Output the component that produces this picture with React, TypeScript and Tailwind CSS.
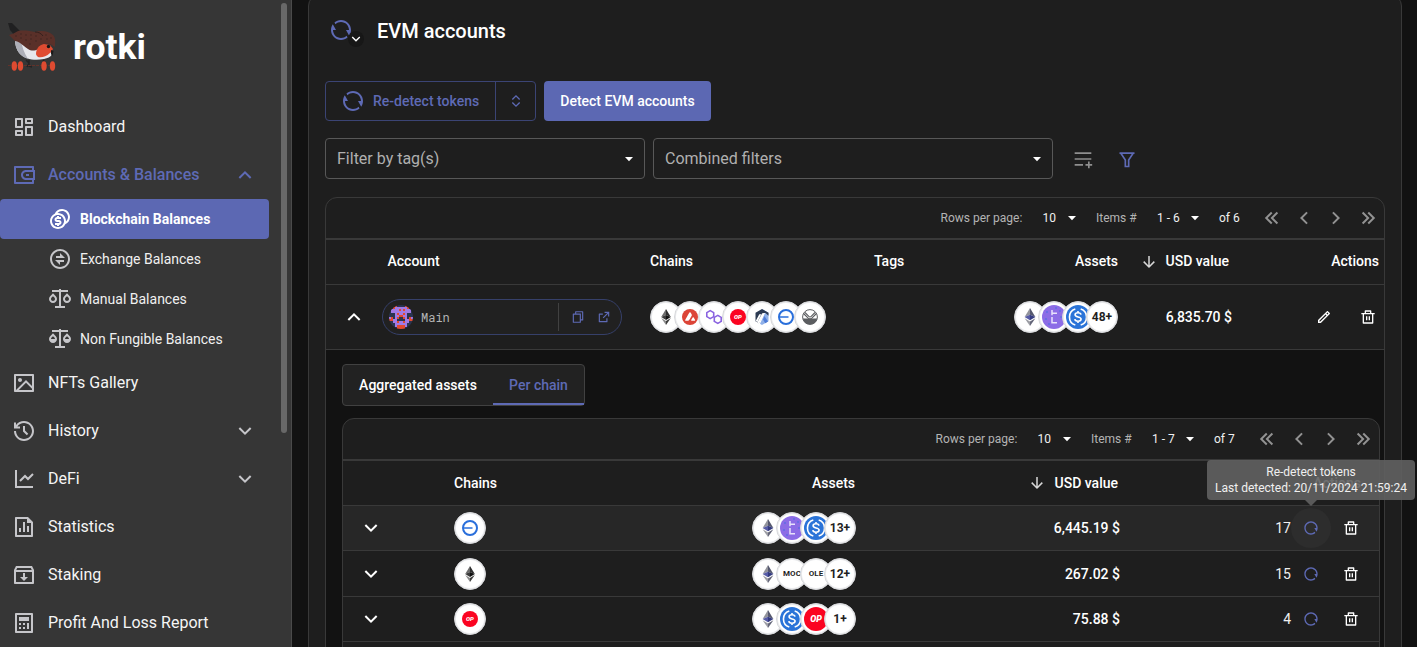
import type { ReactNode } from 'react';
import {
  RiArrowDownLine,
  RiArrowDownSLine,
  RiArrowLeftDoubleLine,
  RiArrowLeftSLine,
  RiArrowRightDoubleLine,
  RiArrowRightSLine,
  RiArrowUpSLine,
  RiCalculatorLine,
  RiCoinsLine,
  RiDashboardLine,
  RiDeleteBinLine,
  RiExchangeLine,
  RiExpandUpDownLine,
  RiExternalLinkLine,
  RiFileChartLine,
  RiFileCopyLine,
  RiFilterLine,
  RiHistoryLine,
  RiImageLine,
  RiInboxArchiveLine,
  RiLineChartLine,
  RiPencilLine,
  RiPlayListAddLine,
  RiRefreshLine,
  RiRestartLine,
  RiScalesFill,
  RiScalesLine,
  RiWallet3Line,
} from 'react-icons/ri';

function BirdLogo() {
  return (
    <svg viewBox="0 0 48 50" className="h-[50px] w-12 shrink-0">
      <path d="M0 1h4l9 9-6 4-5-6z" fill="#202021" />
      <path d="M7 16c0 7 1 11 5 16 5 5 14 7 24 5 5-1 8-3 8-6L30 24 16 18z" fill="#e6e7ec" />
      <path d="M7 16c0 7 1 11 5 16 2 2 5 4 8 5-4-6-6-13-7-18z" fill="#adafb8" />
      <path d="M1 13c3-1 6-2 9-4 6-1 12 0 17 1 6-2 14-1 18 3 3 3 2 8 2 12l-5-3c-5-1-9 0-12 5-3 2-7 2-10 0-6-4-9-8-13-8z" fill="#5a3029" />
      <path d="M27 10c3 0 6 1 8 4" stroke="#33201d" strokeWidth="1" fill="none" />
      <g fill="#3a2420">
        {[[8, 14], [13, 12], [13, 16], [18, 13], [18, 18], [23, 13], [23, 17], [22, 22], [28, 14], [28, 19], [33, 17], [38, 13], [39, 17], [43, 16]].map(([x, y]) => (
          <circle key={`${x}-${y}`} cx={x} cy={y} r="0.7" />
        ))}
      </g>
      <path d="M28 32c0-5 3-9 8-10l6 1 3 4c-1 2-2 3-3 4-4 4-9 5-12 4-1-1-2-2-2-3z" fill="#df4b31" />
      <circle cx="40.5" cy="24.5" r="1.7" fill="#161616" />
      <path d="M43 28l2.5 1-1 5-1.500-2z" fill="#1a1a1a" />
      <path d="M18 38l3 3-2 4M21 38v6l3 1M35 38l3 4" stroke="#232324" strokeWidth="1.5" fill="none" />
      <path d="M0 43.500h47" stroke="#63322a" strokeWidth="1" strokeDasharray="3 1" />
      <ellipse cx="6.300" cy="44" rx="2.700" ry="4.800" fill="#df4b31" />
      <ellipse cx="12.500" cy="44" rx="2.700" ry="4.800" fill="#df4b31" />
      <ellipse cx="36" cy="44" rx="2.700" ry="4.800" fill="#df4b31" />
      <ellipse cx="44.500" cy="44" rx="2.700" ry="4.800" fill="#df4b31" />
    </svg>
  );
}

function Caret() {
  return (
    <svg viewBox="0 0 24 24" className="size-6 shrink-0" fill="#fff">
      <path d="M8 10h8l-4 4.300z" />
    </svg>
  );
}

function Ethereum({ tint = false, className = 'h-4 w-4' }: { tint?: boolean; className?: string }) {
  const c = tint
    ? ['#93949c', '#55586f', '#565ba6', '#343b80', '#9c9da4', '#65677a']
    : ['#6b6b6b', '#2f2f2f', '#3a3a3a', '#111', '#8a8a8a', '#3c3c3b'];
  return (
    <svg viewBox="0 0 16 16" className={className}>
      <path d="M8 0L3.2 8.1 8 5.9z" fill={c[0]} />
      <path d="M8 0v5.9l4.8 2.2z" fill={c[1]} />
      <path d="M3.2 8.1L8 10.9v-5z" fill={c[2]} />
      <path d="M8 10.9l4.8-2.8L8 5.9z" fill={c[3]} />
      <path d="M3.2 9.1L8 16v-4.1z" fill={c[4]} />
      <path d="M8 16l4.8-6.9L8 11.9z" fill={c[5]} />
    </svg>
  );
}

function Avalanche() {
  return (
    <svg viewBox="0 0 16 16" className="h-4 w-4">
      <circle cx="8" cy="8" r="8" fill="#dc4437" />
      <path d="M8 3.2c.4 0 .6.2.8.6l.9 1.7c.2.5.2.8 0 1.3L7.200 11c-.3.5-.6.7-1.200.7H3.900c-.7 0-.9-.4-.6-1l3.900-6.900c.2-.4.4-.6.8-.6zM10.700 8.600c.3-.4.7-.4 1 0l1.300 2.100c.3.6.1 1-.6 1H9.900c-.7 0-.9-.4-.6-1z" fill="#fff" />
    </svg>
  );
}

function Polygon() {
  return (
    <svg viewBox="0 0 16 16" className="h-4 w-4" fill="none" stroke="#8a63e0" strokeWidth="1.6" strokeLinejoin="round">
      <path d="M4.200 1.600l3.500 2v4L4.200 9.600.8 7.600v-4z" />
      <path d="M11.800 6.400l3.400 2v4l-3.400 2-3.500-2v-4z" />
    </svg>
  );
}

function Optimism({ className = 'size-4 text-[6px]' }: { className?: string }) {
  return (
    <span className={`flex shrink-0 items-center justify-center rounded-full bg-[#fb0421] font-black italic leading-none text-white ${className}`}>
      OP
    </span>
  );
}

function Arbitrum() {
  return (
    <svg viewBox="0 0 16 16" className="h-4 w-4">
      <path d="M8 0l6.500 3.800v8.400L8 16l-2-1.200L11 4 8 1z" fill="#8fb0e8" />
      <path d="M8 0l6.500 3.800v3L11.500 4h-2L5 14.200 1.500 12.200V3.800z" fill="#2c3a52" />
      <path d="M8.200 4.200h2.200L5.200 14.500l-1.900-1.100zM5.300 5.200h2L3.400 13l-1.700-1z" fill="#fff" />
      <path d="M10.500 7l3.500 5.500-2.700 1.700-2.300-3.800z" fill="#4d7bd6" />
    </svg>
  );
}

function Base() {
  return (
    <svg viewBox="0 0 16 16" className="h-4 w-4">
      <circle cx="8" cy="8" r="7" fill="none" stroke="#2a6fdb" strokeWidth="2" />
      <path d="M1 8h9.500" stroke="#2a6fdb" strokeWidth="1.4" />
    </svg>
  );
}

function Scroll() {
  return (
    <svg viewBox="0 0 16 16" className="h-4 w-4">
      <circle cx="8" cy="8" r="7.400" fill="#fff" stroke="#5b5d60" strokeWidth="1" />
      <path d="M.8 9.500h14.400A7.400 7.400 0 018 15.500 7.400 7.400 0 01.8 9.500z" fill="#5b5d60" />
      <path d="M1.500 4.500l4.700 4.700c1 .9 2.600.9 3.600 0l4.700-4.700M3 3.500l3.800 3.800c.7.6 1.700.6 2.400 0L13 3.500" fill="none" stroke="#5b5d60" strokeWidth="1.100" />
    </svg>
  );
}

function Tether() {
  return (
    <svg viewBox="0 0 24 24" className="h-6 w-6">
      <circle cx="12" cy="12" r="12" fill="#8c6ce6" />
      <path d="M10 5v5.200M10 8.300h5M10 12v5.700h5" fill="none" stroke="#e8e2fb" strokeWidth="1.500" />
      <g fill="#2f6fe0">
        <circle cx="5" cy="7" r=".7" />
        <circle cx="18" cy="6" r=".7" />
        <circle cx="4" cy="14" r=".7" />
        <circle cx="7" cy="19" r=".7" />
        <circle cx="19" cy="12" r=".7" />
        <circle cx="14" cy="3" r=".7" />
      </g>
    </svg>
  );
}

function UsdCoin() {
  return (
    <svg viewBox="0 0 24 24" className="h-6 w-6" fill="none" stroke="#fff">
      <circle cx="12" cy="12" r="12" fill="#2b74d8" stroke="none" />
      <path d="M9.300 4a8.400 8.400 0 000 16M14.700 4a8.400 8.400 0 010 16" strokeWidth="1.600" />
      <path d="M15 9.700c-.2-1.200-1.300-1.900-3-1.900-1.800 0-2.900.8-2.900 2 0 2.900 6 1.400 6 4.300 0 1.300-1.200 2.100-3.100 2.100s-3-.8-3.200-2.100M12 6v1.800M12 16.200V18" strokeWidth="1.600" />
    </svg>
  );
}

const avatarRows = [
  '...r....r...',
  '..rppppppr..',
  '.pppprprppp.',
  '.pppppppppp.',
  '...prpprp...',
  '...pprrpp...',
  'pr.prnnrp.rp',
  'rrppnnnnpprr',
  '..pprpprpp..',
  '...pppppp...',
  '...prrrrp...',
  '....rrrr....',
];

function Avatar() {
  return (
    <svg viewBox="0 0 12 12" className="size-6 rounded-full bg-[#2a3450]" shapeRendering="crispEdges">
      {avatarRows.flatMap((row, y) =>
        row.split('').map((c, x) =>
          c === 'p' || c === 'r' ? (
            <rect key={`${x}-${y}`} x={x} y={y} width="1" height="1" fill={c === 'p' ? '#a07ae6' : '#e2492f'} />
          ) : null,
        ),
      )}
    </svg>
  );
}

function Disc({ children }: { children: ReactNode }) {
  return (
    <span className="flex size-8 shrink-0 items-center justify-center overflow-hidden rounded-full border border-[#d6d7da] bg-white text-[12px] font-bold text-[#1f1f1f] shadow-[inset_0_0_0_1px_#e9eaec]">
      {children}
    </span>
  );
}

function Ticker({ children }: { children: string }) {
  return <span className="text-[8px] font-bold">{children}</span>;
}

const items = [
  { icon: RiImageLine, label: 'NFTs Gallery' },
  { icon: RiHistoryLine, label: 'History', more: true },
  { icon: RiLineChartLine, label: 'DeFi', more: true },
  { icon: RiFileChartLine, label: 'Statistics' },
  { icon: RiInboxArchiveLine, label: 'Staking' },
  { icon: RiCalculatorLine, label: 'Profit And Loss Report' },
];

const balances = [
  { icon: RiCoinsLine, label: 'Blockchain Balances', active: true },
  { icon: RiExchangeLine, label: 'Exchange Balances' },
  { icon: RiScalesLine, label: 'Manual Balances' },
  { icon: RiScalesFill, label: 'Non Fungible Balances' },
];

function Sidebar() {
  return (
    <aside className="flex h-full w-[292px] shrink-0 border-r border-[#4a4a4a] bg-[#363636]">
      <nav className="w-[281px] shrink-0">
        <div className="flex h-[103px] items-start pl-2 pt-[22px]">
          <BirdLogo />
          <span className="ml-[17px] mt-[3px] text-[35.5px] font-bold leading-[44px] text-white">rotki</span>
        </div>
        <div className="flex h-12 items-center pl-3 text-[16px] text-[#f5f5f5]">
          <RiDashboardLine className="mr-3 size-6 text-[#c6c6ca]" />
          Dashboard
        </div>
        <div className="flex h-12 items-center pl-3 pr-6 text-[16px] font-medium text-[#5e6ab5]">
          <RiWallet3Line className="mr-3 size-6" />
          <span className="flex-1">Accounts &amp; Balances</span>
          <RiArrowUpSLine className="size-6" />
        </div>
        {balances.map(({ icon: Icon, label, active }) => (
          <div
            key={label}
            className={`flex h-10 w-[269px] items-center rounded pl-12 text-[14px] ${active ? 'bg-[#5c68b3] font-bold text-white' : 'text-[#f0f0f0]'}`}
          >
            <Icon className={`mr-2 size-6 ${active ? 'text-white' : 'text-[#c6c6ca]'}`} />
            {label}
          </div>
        ))}
        {items.map(({ icon: Icon, label, more }) => (
          <div key={label} className="flex h-12 items-center pl-3 pr-6 text-[16px] text-[#f5f5f5]">
            <Icon className="mr-3 size-6 text-[#c6c6ca]" />
            <span className="flex-1">{label}</span>
            {more && <RiArrowDownSLine className="size-6 text-[#c6c6ca]" />}
          </div>
        ))}
      </nav>
      <div className="mt-[3px] h-[430px] w-1.5 shrink-0 rounded-full bg-[#686868]" />
    </aside>
  );
}

function Pagination({ range, total }: { range: string; total: string }) {
  return (
    <div className="flex h-10 items-center justify-end pr-1 text-[12px] text-[#f0f0f0]">
      <span className="w-[102px] text-[#b4b4b4]">Rows per page:</span>
      <span className="w-[17.5px]">10</span>
      <Caret />
      <span className="ml-3 w-[61px] text-[#b4b4b4]">Items #</span>
      <span className="w-[26px] whitespace-nowrap">{range}</span>
      <Caret />
      <span className="ml-3 w-[41px]">{total}</span>
      <span className="flex gap-2 text-[#929292]">
        <RiArrowLeftDoubleLine className="size-6" />
        <RiArrowLeftSLine className="size-6" />
        <RiArrowRightSLine className="size-6" />
        <RiArrowRightDoubleLine className="size-6" />
      </span>
    </div>
  );
}

const chainRows = [
  {
    chain: <Base />,
    assets: [<Ethereum tint className="size-[18px]" />, <Tether />, <UsdCoin />, '13+'],
    value: '6,445.19 $',
    tokens: 17,
    height: 'h-[45px] bg-[#272727]',
    tip: true,
  },
  {
    chain: <Ethereum />,
    assets: [<Ethereum tint className="size-[18px]" />, <Ticker>MOC</Ticker>, <Ticker>OLE</Ticker>, '12+'],
    value: '267.02 $',
    tokens: 15,
    height: 'h-[46px]',
  },
  {
    chain: <Optimism />,
    assets: [<Ethereum tint className="size-[18px]" />, <UsdCoin />, <Optimism className="size-6 text-[9px]" />, '1+'],
    value: '75.88 $',
    tokens: 4,
    height: 'h-[45px]',
  },
];

function Tooltip() {
  return (
    <div className="absolute bottom-[48px] left-1/2 z-10 w-[208px] -translate-x-1/2 rounded bg-[#616161]/90 py-1 text-center text-[12px] leading-4 text-[#f0f0f0]">
      <div>Re-detect tokens</div>
      <div className="whitespace-nowrap">Last detected: 20/11/2024 21:59:24</div>
      <div className="absolute left-1/2 top-full -translate-x-1/2 border-x-[6px] border-t-[6px] border-x-transparent border-t-[#616161]/90" />
    </div>
  );
}

function ChainTable() {
  return (
    <div className="ml-4 mr-1 mt-3 h-[300px] rounded-t-xl border border-[#393939] bg-[#1e1e1e]">
      <Pagination range="1 - 7" total="of 7" />
      <div className="grid h-[47px] grid-cols-[111px_200px_201px_264px_1fr] items-center border-y border-t-2 border-[#393939] text-[14px] font-medium text-white">
        <span />
        <span>Chains</span>
        <span className="text-right">Assets</span>
        <span className="flex items-center justify-end pr-px">
          <RiArrowDownLine className="mr-[9px] size-[18px] text-[#d8d8d8]" />
          USD value
        </span>
        <span className="pr-[18px] text-right">Actions</span>
      </div>
      {chainRows.map((row) => (
        <div
          key={row.tokens}
          className={`grid grid-cols-[111px_200px_202px_264px_1fr] items-center border-b border-[#393939] ${row.height}`}
        >
          <RiArrowDownSLine className="ml-4 size-6 text-white" />
          <Disc>{row.chain}</Disc>
          <span className="flex justify-end -space-x-2">
            {row.assets.map((asset, i) => (
              <Disc key={i}>{asset}</Disc>
            ))}
          </span>
          <span className="pt-px text-right text-[14px] font-medium text-white">{row.value}</span>
          <span className="flex items-center justify-end pr-5 text-[14px] text-[#f0f0f0]">
            <span className="pt-px">{row.tokens}</span>
            <span className={`relative flex size-10 items-center justify-center rounded-full ${row.tip ? 'bg-[#2d2d2d]' : ''}`}>
              <RiRestartLine className="size-4 text-[#5e6ab5]" />
              {row.tip && <Tooltip />}
            </span>
            <RiDeleteBinLine className="ml-3 size-4 text-white" />
          </span>
        </div>
      ))}
    </div>
  );
}

const mainCols = 'grid grid-cols-[56px_268px_224px_244px_114px_152px] items-center';

function AccountsTable() {
  return (
    <div className="mt-[18px] h-[500px] w-[1060px] rounded-t-xl border border-[#393939]">
      <Pagination range="1 - 6" total="of 6" />
      <div className={`${mainCols} h-[47px] border-b border-t-2 border-[#393939] pb-px text-[14px] font-medium text-white`}>
        <span />
        <span className="pl-[5.5px]">Account</span>
        <span>Chains</span>
        <span className="flex justify-between">
          <span>Tags</span>
          <span>Assets</span>
        </span>
        <span className="flex items-center justify-end pr-[3px]">
          <RiArrowDownLine className="mr-2 size-[18px] text-[#d8d8d8]" />
          USD value
        </span>
        <span className="pr-[5px] text-right">Actions</span>
      </div>
      <div className={`${mainCols} h-[65px] border-b border-[#393939]`}>
        <RiArrowUpSLine className="ml-4 size-6 text-white" />
        <div className="flex h-9 w-60 items-center rounded-full border border-[#36406a] bg-[#212121] pl-1.5 pr-2.5">
          <Avatar />
          <span className="ml-2 flex-1 font-['Roboto_Mono','DejaVu_Sans_Mono','Liberation_Mono',monospace] text-[12px] text-[#b4b4b4]">Main</span>
          <span className="h-7 w-px bg-[#414141]" />
          <RiFileCopyLine className="ml-3 size-[14px] text-[#5e6ab5]" />
          <RiExternalLinkLine className="ml-3 size-[14px] text-[#5e6ab5]" />
        </div>
        <div className="flex -space-x-2">
          <Disc><Ethereum /></Disc>
          <Disc><Avalanche /></Disc>
          <Disc><Polygon /></Disc>
          <Disc><Optimism /></Disc>
          <Disc><Arbitrum /></Disc>
          <Disc><Base /></Disc>
          <Disc><Scroll /></Disc>
        </div>
        <div className="flex justify-end -space-x-2">
          <Disc><Ethereum tint className="size-[18px]" /></Disc>
          <Disc><Tether /></Disc>
          <Disc><UsdCoin /></Disc>
          <Disc>48+</Disc>
        </div>
        <span className="text-right text-[14px] font-medium text-white">6,835.70 $</span>
        <div className="flex justify-end gap-7 pr-2 text-white">
          <RiPencilLine className="size-4" />
          <RiDeleteBinLine className="size-4" />
        </div>
      </div>
      <div className="h-[400px] bg-[#121212] pt-[14px]">
        <div className="ml-4 flex h-[42px] w-[243px] rounded border border-[#414141] bg-[#222] text-[14px] font-medium">
          <span className="flex w-[150px] items-center justify-center text-white">Aggregated assets</span>
          <span className="flex flex-1 items-center justify-center border-b-2 border-[#5e6ab5] pt-0.5 text-[#5e6ab5]">Per chain</span>
        </div>
        <ChainTable />
      </div>
    </div>
  );
}

function Select({ label, width }: { label: string; width: string }) {
  return (
    <div className={`flex h-[41px] items-center justify-between rounded border border-[#585858] pl-[11px] pr-[3px] text-[16px] text-[#b0b0b0] ${width}`}>
      {label}
      <Caret />
    </div>
  );
}

export default function App() {
  return (
    <div className="flex h-[647px] w-[1417px] overflow-hidden bg-[#121212] font-['Roboto',sans-serif]">
      <Sidebar />
      <main className="ml-4 -mt-[6px] h-[700px] w-[1094px] rounded-xl border border-[#393939] bg-[#1e1e1e] pl-4">
        <div className="flex h-[86px] items-start pt-[23px]">
          <div className="relative ml-1 size-6">
            <RiRefreshLine className="size-6 text-[#5e6ab5]" />
            <span className="absolute left-[19px] top-[13px] flex size-4 items-center justify-center rounded-full bg-[#171717]">
              <RiArrowDownSLine className="size-4 text-white" />
            </span>
          </div>
          <h1 className="ml-6 text-[20px] font-medium leading-[27px] text-white">EVM accounts</h1>
        </div>
        <div className="flex h-10 text-[14px] font-medium">
          <div className="flex w-[211px] items-center rounded border border-[#3b4474] text-[#5e6ab5]">
            <RiRefreshLine className="ml-[15px] mr-2 size-6" />
            <span className="flex-1">Re-detect tokens</span>
            <span className="flex h-full w-10 items-center justify-center border-l border-[#3b4474]">
              <RiExpandUpDownLine className="size-4" />
            </span>
          </div>
          <div className="ml-2 flex w-[167px] items-center justify-center rounded bg-[#5c68b3] text-white">Detect EVM accounts</div>
        </div>
        <div className="mt-[17px] flex items-center">
          <Select label="Filter by tag(s)" width="w-80" />
          <div className="ml-2">
            <Select label="Combined filters" width="w-[400px]" />
          </div>
          <RiPlayListAddLine className="ml-5 size-5 text-[#8f8f8f]" />
          <RiFilterLine className="ml-6 size-5 text-[#5e6ab5]" />
        </div>
        <AccountsTable />
      </main>
    </div>
  );
}
